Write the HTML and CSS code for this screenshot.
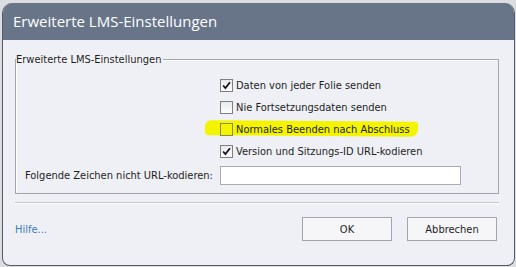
FILE: index.html
```html
<!DOCTYPE html>
<html lang="de">

<head>
  <meta charset="UTF-8" />
  <title>Erweiterte LMS-Einstellungen</title>
  <link rel="stylesheet" href="styles.css">
</head>

<body>
  <div class="window">
    <div class="titlebar">Erweiterte LMS-Einstellungen</div>

    <div class="content">
      <!-- group box with options -->
      <fieldset class="group">
        <legend>Erweiterte LMS-Einstellungen</legend>

        <div class="options">
          <label class="option">
            <span class="box checked"><svg viewBox="0 0 13 13"><path d="M2.5 6.5 L5.2 9.6 L10.6 2.6" /></svg></span>
            <span>Daten von jeder Folie senden</span>
          </label>
          <label class="option">
            <span class="box"></span>
            <span>Nie Fortsetzungsdaten senden</span>
          </label>
          <label class="option marked">
            <span class="box"></span>
            <span class="text">Normales Beenden nach Abschluss</span>
          </label>
          <label class="option">
            <span class="box checked"><svg viewBox="0 0 13 13"><path d="M2.5 6.5 L5.2 9.6 L10.6 2.6" /></svg></span>
            <span>Version und Sitzungs-ID URL-kodieren</span>
          </label>
        </div>

        <div class="field">
          <label for="chars">Folgende Zeichen nicht URL-kodieren:</label>
          <input id="chars" type="text" />
        </div>
      </fieldset>

      <div class="separator"></div>

      <div class="footer">
        <a class="help" href="#">Hilfe...</a>
        <div class="buttons">
          <button>OK</button>
          <button>Abbrechen</button>
        </div>
      </div>
    </div>
  </div>
</body>

</html>
```

FILE: styles.css
```css
* {
  box-sizing: border-box;
}

/* desktop behind the dialog */
body {
  margin: 0;
  height: 267px;
  overflow: hidden;
  background: #dcdde1;
  font-family: "DejaVu Sans Condensed", "DejaVu Sans", Tahoma, sans-serif;
  font-size: 11px;
  color: #1e1e1e;
}

/* dialog frame */
.window {
  margin: 3px 1px 0 2px;
  height: 263px;
  border: 1px solid #555c68;
  border-top: none;
  border-radius: 10px 10px 8px 8px;
  background: #eff0f5;
  overflow: hidden;
  display: flex;
  flex-direction: column;
}

.titlebar {
  height: 37px;
  flex-shrink: 0;
  background: #687589;
  color: #fff;
  font-family: "Open Sans", sans-serif;
  font-size: 15px;
  line-height: 36px;
  padding-left: 10px;
}

.content {
  padding: 13px 15px 0 12px;
}

/* group box */
.group {
  margin: 0;
  padding: 0 0 8px 0;
  border: 1px solid #a2a5ad;
  box-shadow: inset 1px 1px 0 #fff;
  height: 141px;
}

.group legend {
  margin-left: 0;
  padding: 0 2px 0 0;
  font-size: 11px;
}

.options {
  display: flex;
  flex-direction: column;
  gap: 9px;
  padding: 13px 0 0 204px;
}

.option {
  display: flex;
  align-items: center;
  gap: 3px;
  height: 13px;
}

.box {
  width: 13px;
  height: 13px;
  border: 1px solid #7c7f86;
  background: linear-gradient(#e8e9ec, #fdfdfd);
  display: flex;
}

.box svg {
  width: 11px;
  height: 11px;
}

.box svg path {
  fill: none;
  stroke: #111;
  stroke-width: 2;
}

/* yellow marker over the third option */
.marked {
  position: relative;
}

.marked::before {
  content: '';
  position: absolute;
  left: -15px;
  top: -2px;
  width: 213px;
  height: 15px;
  background: #f4f400;
  border-radius: 6px 3px 7px 4px;
  transform: rotate(0.4deg);
}

.marked .box,
.marked .text {
  position: relative;
}

.marked .box {
  background: transparent;
  border-color: #8a8a4a;
}

.field {
  display: flex;
  align-items: center;
  padding: 8px 0 0 9px;
}

.field label {
  width: 195px;
  white-space: nowrap;
}

.field input {
  width: 241px;
  height: 19px;
  border: 1px solid #a9abb2;
  background: #fff;
  outline: none;
}

.separator {
  margin-top: 8px;
  border-top: 1px solid #c5c7cd;
  border-bottom: 1px solid #fbfbfd;
}

.footer {
  display: flex;
  justify-content: space-between;
  align-items: center;
  padding: 13px 2px 0 0;
}

.help {
  color: #3b7cb8;
  text-decoration: none;
}

.buttons {
  display: flex;
  gap: 15px;
}

.buttons button {
  width: 90px;
  height: 24px;
  border: 1px solid #a2a5ad;
  background: #f6f6f9;
  font-family: inherit;
  font-size: 11px;
  color: #1e1e1e;
}
```
